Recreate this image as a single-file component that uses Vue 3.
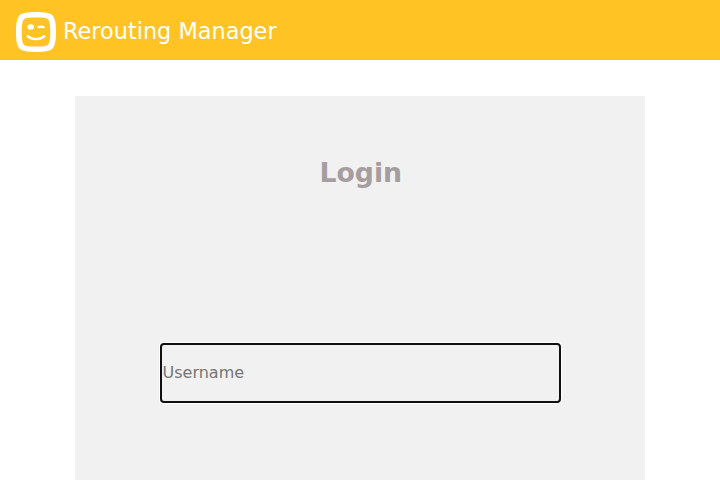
<script setup>
import { ref } from 'vue'

const username = ref('')
</script>

<template>
  <div class="page">
    <header class="header">
      <svg class="logo" viewBox="0 0 40 40" aria-hidden="true">
        <path
          fill="#fff"
          fill-rule="evenodd"
          d="M20 0C28 0 34 .8 36.4 3.2C39.2 6 40 12 40 20S39.2 34 36.4 36.8C34 39.2 28 40 20 40S6 39.2 3.6 36.8C.8 34 0 28 0 20S.8 6 3.6 3.2C6 .8 12 0 20 0ZM20 5.4C13.5 5.4 9.6 5.7 8 7.2C6.3 8.8 5.7 13.5 5.7 20S6.3 31.2 8 32.8C9.6 34.3 13.5 34.6 20 34.6S30.4 34.3 32 32.8C33.7 31.2 34.3 26.5 34.3 20S33.7 8.8 32 7.2C30.4 5.7 26.5 5.4 20 5.4Z"
        />
        <ellipse cx="14.8" cy="15" rx="3.3" ry="2.8" fill="#fff" />
        <path d="M22.6 15Q25.1 14.5 27.5 15.1" fill="none" stroke="#fff" stroke-width="2.4" stroke-linecap="round" />
        <path d="M11.7 24.2C15.8 28 24 28.1 28.3 24.2" fill="none" stroke="#fff" stroke-width="2.4" stroke-linecap="round" />
      </svg>
      <span class="brand">Rerouting Manager</span>
    </header>
    <main class="panel">
      <h1 class="title">Login</h1>
      <input v-model="username" class="field" type="text" placeholder="Username" />
    </main>
  </div>
</template>

<style>
body {
  margin: 0;
  overflow: hidden;
}
</style>

<style scoped>
.page {
  height: 480px;
  display: flex;
  flex-direction: column;
  overflow: hidden;
  background: #fff;
  font-family: "DejaVu Sans", sans-serif;
}

.header {
  box-sizing: border-box;
  height: 60px;
  flex: none;
  display: flex;
  align-items: center;
  gap: 7px;
  padding: 4px 16px 0;
  background: #ffc423;
  color: #fff;
}

.logo {
  width: 40px;
  height: 40px;
}

.brand {
  font-size: 22.4px;
  line-height: 26px;
  margin-top: -3px;
}

.panel {
  box-sizing: border-box;
  width: 570px;
  flex: 1;
  margin: 36px auto 0;
  padding-top: 61px;
  display: flex;
  flex-direction: column;
  align-items: center;
  background: #f1f1f1;
}

.title {
  margin: 0 0 155px;
  padding-left: 1.5px;
  font-size: 26.7px;
  line-height: 32px;
  color: #a59d9f;
}

.field {
  box-sizing: border-box;
  width: 399px;
  height: 58px;
  border: 0;
  padding: 0 2px 2px;
  background: transparent;
  font: 16px "DejaVu Sans", sans-serif;
  color: #222;
  outline: #101010 auto 1px;
}

.field::placeholder {
  color: #757575;
}
</style>
